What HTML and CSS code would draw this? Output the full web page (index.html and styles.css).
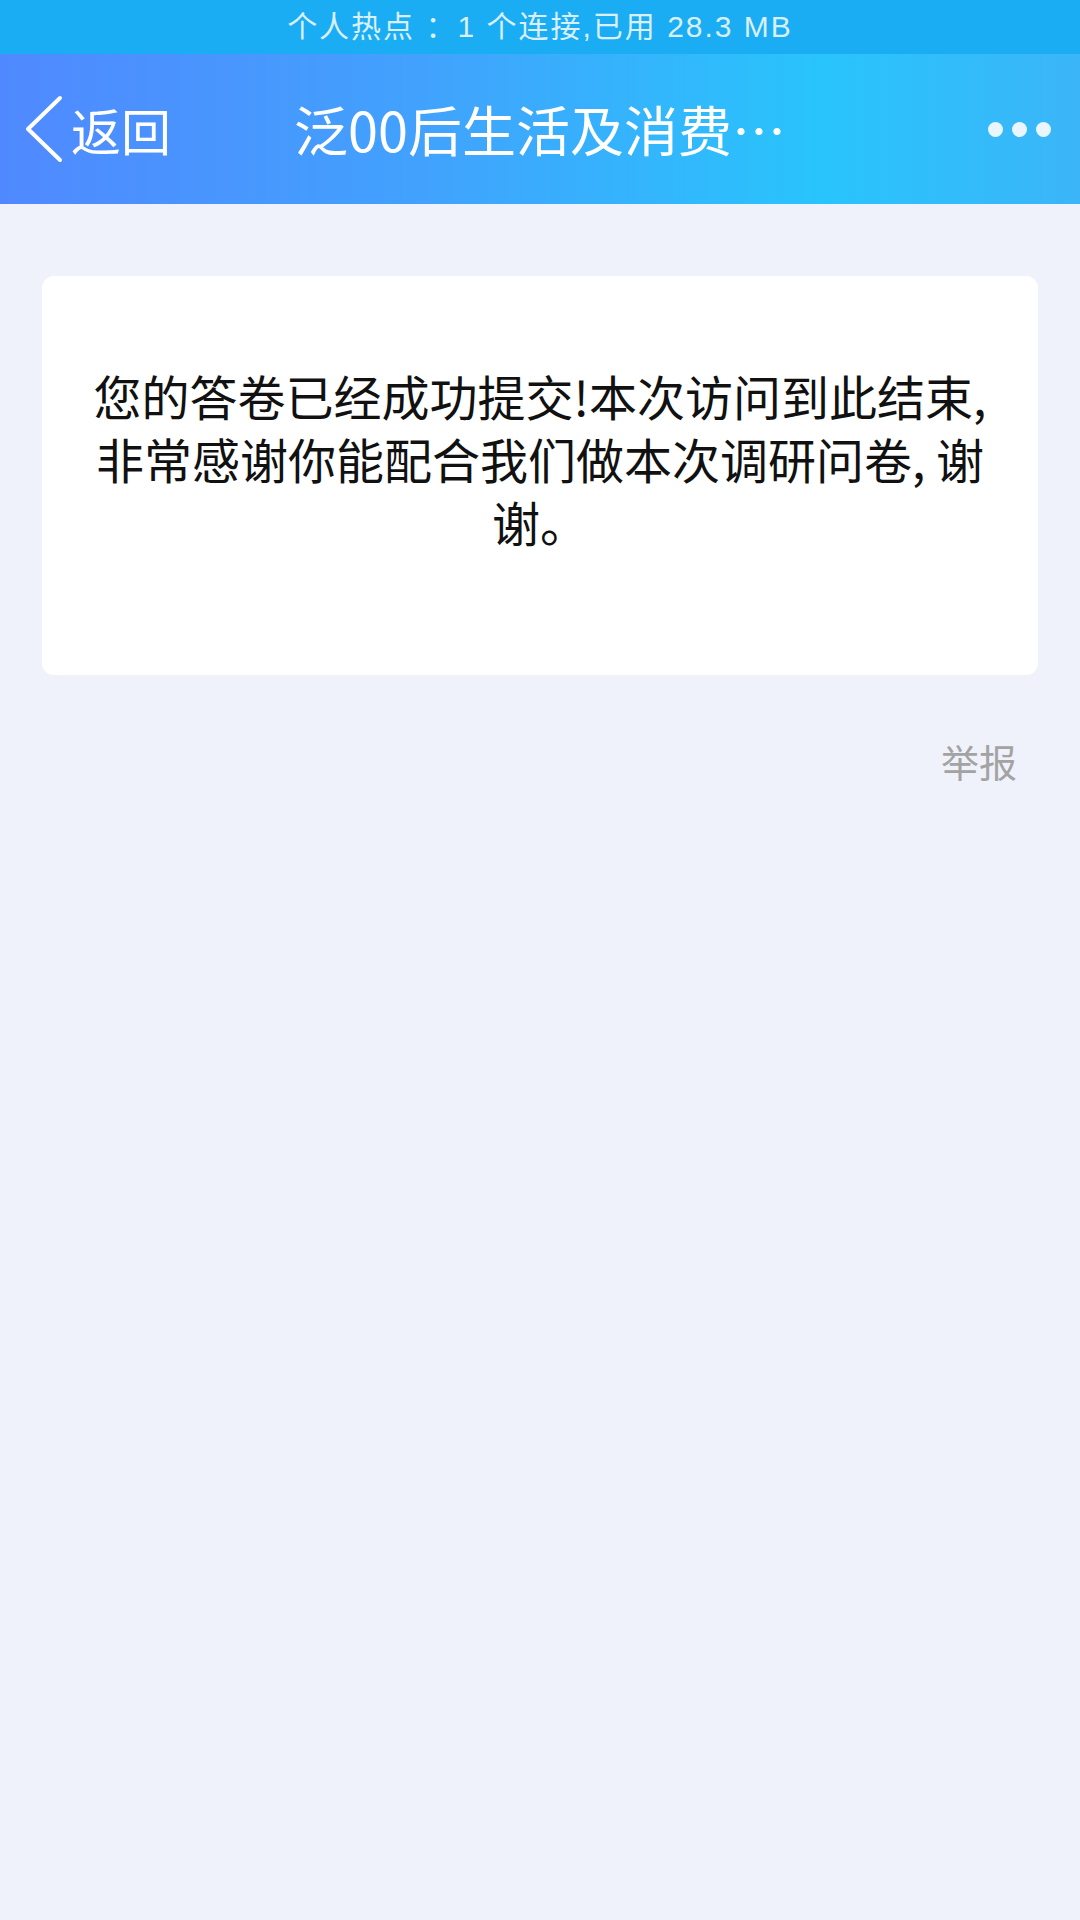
FILE: index.html
```html
<!DOCTYPE html>
<html lang="zh-CN">
<head>
<meta charset="utf-8">
<link rel="stylesheet" href="styles.css">
</head>
<body>
<div class="statusbar">个人热点 ：1 个连接,已用 28.3 MB</div>
<header class="navbar">
  <div class="back">
    <svg class="chev" width="40" height="70" viewBox="0 0 40 70"><polyline points="36,4 4,35 36,66" fill="none" stroke="#fff" stroke-width="4" stroke-linecap="round" stroke-linejoin="round"/></svg>
    <span class="back-text">返回</span>
  </div>
  <div class="title">泛00后生活及消费…</div>
  <div class="more"><i></i><i></i><i></i></div>
</header>
<main class="content">
  <section class="card">
    <p class="msg">您的答卷已经成功提交!本次访问到此结束, 非常感谢你能配合我们做本次调研问卷, 谢谢。</p>
  </section>
  <div class="report-row"><span class="report">举报</span></div>
</main>
</body>
</html>
```
FILE: styles.css
```css
* { box-sizing: border-box; }
html, body { margin: 0; padding: 0; }
body {
  width: 1080px;
  min-height: 1920px;
  background: #eff2fa;
  font-family: "Noto Sans CJK SC", "Noto Sans", sans-serif;
}
.statusbar {
  height: 54px;
  background: #1badf3;
  color: #d9effc;
  font-family: "Liberation Sans", "Noto Sans CJK SC", sans-serif;
  font-size: 30px;
  letter-spacing: 2px;
  line-height: 54px;
  text-align: center;
}
.navbar {
  height: 150px;
  background: linear-gradient(90deg, #5089ff 0%, #42a1fd 38%, #29c4fc 76%, #3bb5f8 100%);
  display: flex;
  align-items: center;
  position: relative;
  color: #fff;
}
.back {
  display: flex;
  align-items: center;
  padding-left: 24px;
  gap: 7px;
}
.chev { display: block; }
.back-text { font-size: 50px; line-height: 1; }
.title {
  position: absolute;
  left: 0; right: 0;
  text-align: center;
  font-size: 54px;
  line-height: 1;
  pointer-events: none;
}
.more {
  margin-left: auto;
  margin-right: 29px;
  display: flex;
  gap: 9px;
}
.more i {
  width: 15px;
  height: 15px;
  border-radius: 50%;
  background: #eaf6fe;
}
.content {
  padding: 72px 42px 0;
}
.card {
  background: #fff;
  border-radius: 12px;
  padding: 88px 40px 122px;
}
.msg {
  margin: 0;
  font-size: 48px;
  line-height: 63px;
  text-align: center;
  color: #111;
}
.report-row {
  display: flex;
  justify-content: flex-end;
  padding: 62px 21px 0 0;
}
.report {
  font-size: 38px;
  line-height: 48px;
  color: #a3a3a3;
}
```
